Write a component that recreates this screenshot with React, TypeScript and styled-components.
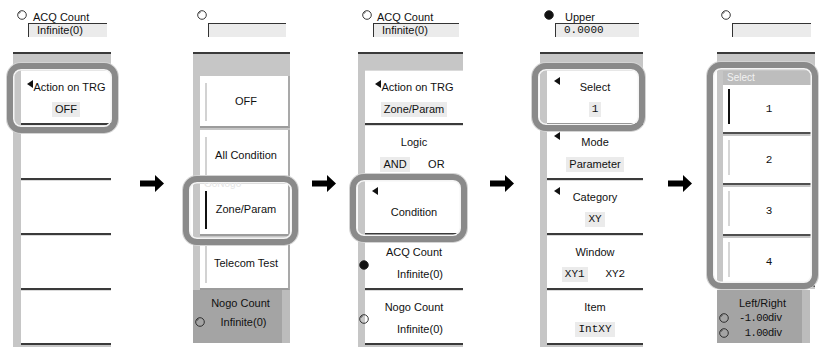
import React from "react";
import styled, { createGlobalStyle, css } from "styled-components";

const GlobalStyle = createGlobalStyle`
  body {
    margin: 0;
    background: #fff;
  }
  * {
    box-sizing: border-box;
  }
`;

const Stage = styled.div`
  display: flex;
  width: 821px;
  height: 347px;
  padding-left: 13px;
  overflow: hidden;
  font-family: "Liberation Sans", Arial, sans-serif;
  font-size: 11px;
  color: #111;
`;

const Panel = styled.div<{ $w: number }>`
  width: ${p => p.$w}px;
  flex: none;
  display: flex;
  flex-direction: column;
`;

const ArrowSlot = styled.div<{ $w: number }>`
  width: ${p => p.$w}px;
  flex: none;
  display: flex;
  justify-content: center;
  padding-top: 175px;
`;

const Header = styled.div`
  height: 54px;
  flex: none;
  border-bottom: 2px solid #3a3a3a;
  display: flex;
  align-items: flex-start;
  padding: 10px 4px 0 4px;
`;

const Field = styled.div`
  flex: 1;
  margin-left: 1px;
  padding-top: 1px;
`;

const FieldLabel = styled.div<{ $pad: number }>`
  height: 12px;
  line-height: 12px;
  padding-left: ${p => p.$pad}px;
  white-space: nowrap;
`;

const FieldBox = styled.div<{ $mono?: boolean }>`
  height: 14px;
  border-top: 1px solid #333;
  border-left: 1px solid #333;
  background: #ebebeb;
  line-height: 13px;
  padding-left: 8px;
  white-space: nowrap;
  ${p => p.$mono && css`
    font-family: "Liberation Mono", monospace;
    font-size: 11px;
  `}
`;

const Body = styled.div<{ $strip: number }>`
  flex: 1;
  background: #c6c6c6;
  padding: 16px 0 0 ${p => p.$strip}px;
  display: flex;
  flex-direction: column;
`;

const OpenBody = styled.div`
  flex: 1;
  display: flex;
  flex-direction: column;
`;

const ListArea = styled.div<{ $strip: number; $top: number }>`
  background: #c6c6c6;
  padding: ${p => p.$top}px 0 0 ${p => p.$strip}px;
`;

const ring = (inset: string) => css`
  &::after {
    content: "";
    position: absolute;
    inset: ${inset};
    border: 6px solid #8a8a8a;
    border-radius: 14px;
    box-shadow: inset 0 0 0 1.5px #f4f4f4, 0 0 0 1px #d4d4d4;
    pointer-events: none;
    z-index: 3;
  }
`;

const Key = styled.div<{ $ring?: string; $pt?: number }>`
  position: relative;
  height: 55px;
  flex: none;
  background: #fff;
  border-top: 1px solid #dadada;
  border-bottom: 2px solid #3a3a3a;
  display: flex;
  flex-direction: column;
  align-items: center;
  justify-content: center;
  gap: 8px;
  padding-top: ${p => p.$pt ?? 3}px;
  ${p => p.$ring && ring(p.$ring)}
`;

const Title = styled.div`
  line-height: 13px;
  white-space: nowrap;
  display: flex;
  align-items: flex-start;
`;

const Value = styled.span<{ $hl?: boolean; $mono?: boolean; $shift?: number }>`
  line-height: 15px;
  padding: 0 3px;
  white-space: nowrap;
  margin-left: ${p => p.$shift ?? 0}px;
  background: ${p => (p.$hl ? "#ebebeb" : "transparent")};
  ${p => p.$mono && css`
    font-family: "Liberation Mono", monospace;
  `}
`;

const Options = styled.div`
  align-self: stretch;
  display: flex;
  justify-content: space-evenly;
`;

const Tri = styled.span`
  display: inline-block;
  width: 0;
  height: 0;
  border-top: 4px solid transparent;
  border-bottom: 4px solid transparent;
  border-right: 6px solid #111;
  margin: -1px 1px 0 0;
`;

const CornerTri = styled(Tri)`
  position: absolute;
  left: 7px;
  top: 7px;
`;

const KnobSpot = styled.span<{ $top: number; $left: number }>`
  position: absolute;
  top: ${p => p.$top}px;
  left: ${p => p.$left}px;
  line-height: 0;
`;

const ChoiceList = styled.div`
  display: flex;
  flex-direction: column;
  gap: 2px;
`;

const Choice = styled.div<{ $on?: boolean; $ring?: string }>`
  position: relative;
  height: 52px;
  background: #fff;
  border-right: 2px solid #a9a9a9;
  border-bottom: 2px solid #9c9c9c;
  display: flex;
  align-items: center;
  justify-content: center;
  padding-left: 4px;
  &::before {
    content: "";
    position: absolute;
    left: 5px;
    top: 7px;
    bottom: 5px;
    width: 2px;
    background: ${p => (p.$on ? "#111" : "#d2d2d2")};
  }
  ${p => p.$ring && ring(p.$ring)}
`;

const GroupTag = styled.span`
  position: absolute;
  left: 4px;
  top: -5px;
  font-size: 10px;
  line-height: 10px;
  color: #e4e4e4;
`;

const SelectList = styled.div<{ $ring?: string }>`
  position: relative;
  ${p => p.$ring && ring(p.$ring)}
`;

const Caption = styled.div`
  height: 14px;
  line-height: 14px;
  font-size: 10px;
  color: #f2f2f2;
  padding-left: 4px;
  background: #bdbdbd;
`;

const Item = styled.div<{ $on?: boolean }>`
  position: relative;
  height: 49px;
  margin-bottom: 2px;
  background: #fff;
  border-bottom: 2px solid #505050;
  display: flex;
  align-items: center;
  justify-content: center;
  font-family: "Liberation Mono", monospace;
  &::before {
    content: "";
    position: absolute;
    left: 5px;
    top: 4px;
    bottom: 8px;
    width: 2px;
    background: ${p => (p.$on ? "#111" : "#d6d6d6")};
  }
`;

const Readout = styled.div<{ $w: number; $mt: number }>`
  width: ${p => p.$w}px;
  height: 53px;
  margin-top: ${p => p.$mt}px;
  background: #a4a4a4;
  border-right: 8px solid #bcbcbc;
  padding: 6px 0 0 2px;
  display: flex;
  flex-direction: column;
`;

const ReadTitle = styled.div`
  text-align: center;
  line-height: 14px;
  padding-left: 4px;
`;

const ReadRow = styled.div<{ $end?: boolean }>`
  display: flex;
  align-items: center;
  height: 15px;
  margin-top: ${p => (p.$end ? 0 : 4)}px;
`;

const ReadValue = styled.span<{ $end?: boolean }>`
  flex: 1;
  text-align: ${p => (p.$end ? "right" : "center")};
  padding-right: ${p => (p.$end ? 20 : 0)}px;
  white-space: nowrap;
`;

const Num = styled.span`
  font-family: "Liberation Mono", monospace;
  font-size: 10.5px;
  letter-spacing: -0.5px;
`;

function Knob({ filled }: { filled?: boolean }) {
  return (
    <svg width="10" height="10" viewBox="0 0 10 10">
      <circle cx="5" cy="5" r="4.3" fill={filled ? "#111" : "none"} stroke="#222" strokeWidth="0.9" />
      {!filled && <path d="M2 3.6 A3.4 3.4 0 0 1 3.6 2" fill="none" stroke="#222" strokeWidth="0.9" />}
    </svg>
  );
}

function Arrow() {
  return (
    <svg width="24" height="17" viewBox="0 0 24 17">
      <path d="M0 5.5 H15 V0 L24 8.5 L15 17 V11.5 H0 Z" fill="#000" />
    </svg>
  );
}

interface HeadProps {
  label?: string;
  value?: string;
  pad?: number;
  filled?: boolean;
  mono?: boolean;
}

function Head({ label = "", value = "", pad = 5, filled, mono }: HeadProps) {
  return (
    <Header>
      <Knob filled={filled} />
      <Field>
        <FieldLabel $pad={pad}>{label}</FieldLabel>
        <FieldBox $mono={mono}>{value}</FieldBox>
      </Field>
    </Header>
  );
}

export default function App() {
  return (
    <>
      <GlobalStyle />
      <Stage>
        <Panel $w={98}>
          <Head label="ACQ Count" value="Infinite(0)" pad={5} />
          <Body $strip={8}>
            <Key $ring="-8px -7px -10px -14px">
              <Title><Tri />Action on TRG</Title>
              <Value $hl>OFF</Value>
            </Key>
            <Key />
            <Key />
            <Key />
            <Key />
          </Body>
        </Panel>

        <ArrowSlot $w={82}><Arrow /></ArrowSlot>

        <Panel $w={97}>
          <Head />
          <OpenBody>
            <ListArea $strip={7} $top={22}>
              <ChoiceList>
                <Choice>OFF</Choice>
                <Choice>All Condition</Choice>
                <Choice $on $ring="-8px -10px -11px -17px">
                  <GroupTag>GoNogo</GroupTag>
                  Zone/Param
                </Choice>
                <Choice>Telecom Test</Choice>
              </ChoiceList>
            </ListArea>
            <Readout $w={97} $mt={0}>
              <ReadTitle>Nogo Count</ReadTitle>
              <ReadRow>
                <Knob />
                <ReadValue>Infinite(0)</ReadValue>
              </ReadRow>
            </Readout>
          </OpenBody>
        </Panel>

        <ArrowSlot $w={68}><Arrow /></ArrowSlot>

        <Panel $w={105}>
          <Head label="ACQ Count" value="Infinite(0)" pad={4} />
          <Body $strip={7}>
            <Key>
              <Title><Tri />Action on TRG</Title>
              <Value $hl>Zone/Param</Value>
            </Key>
            <Key>
              <Title>Logic</Title>
              <Options>
                <Value $hl>AND</Value>
                <Value>OR</Value>
              </Options>
            </Key>
            <Key $ring="-7px -4px -9px -15px" $pt={10}>
              <CornerTri />
              <Title>Condition</Title>
            </Key>
            <Key>
              <KnobSpot $top={24} $left={-6}><Knob filled /></KnobSpot>
              <Title>ACQ Count</Title>
              <Value $shift={12}>Infinite(0)</Value>
            </Key>
            <Key>
              <KnobSpot $top={23} $left={-6}><Knob /></KnobSpot>
              <Title>Nogo Count</Title>
              <Value $shift={12}>Infinite(0)</Value>
            </Key>
          </Body>
        </Panel>

        <ArrowSlot $w={77}><Arrow /></ArrowSlot>

        <Panel $w={103}>
          <Head label="Upper" value="0.0000" pad={10} filled mono />
          <Body $strip={7}>
            <Key $ring="-8px -2px -8px -15px">
              <CornerTri />
              <Title>Select</Title>
              <Value $hl $mono>1</Value>
            </Key>
            <Key>
              <CornerTri />
              <Title>Mode</Title>
              <Value $hl>Parameter</Value>
            </Key>
            <Key>
              <CornerTri />
              <Title>Category</Title>
              <Value $hl $mono>XY</Value>
            </Key>
            <Key>
              <Title>Window</Title>
              <Options>
                <Value $hl $mono>XY1</Value>
                <Value $mono>XY2</Value>
              </Options>
            </Key>
            <Key>
              <Title>Item</Title>
              <Value $hl $mono>IntXY</Value>
            </Key>
          </Body>
        </Panel>

        <ArrowSlot $w={74}><Arrow /></ArrowSlot>

        <Panel $w={98}>
          <Head />
          <OpenBody>
            <ListArea $strip={6} $top={17}>
              <SelectList $ring="-9px -3px -2px -16px">
                <Caption>Select</Caption>
                <Item $on>1</Item>
                <Item>2</Item>
                <Item>3</Item>
                <Item>4</Item>
              </SelectList>
            </ListArea>
            <Readout $w={93} $mt={1}>
              <ReadTitle>Left/Right</ReadTitle>
              <ReadRow $end>
                <Knob />
                <ReadValue $end><Num>-1.00</Num>div</ReadValue>
              </ReadRow>
              <ReadRow $end>
                <Knob />
                <ReadValue $end><Num>1.00</Num>div</ReadValue>
              </ReadRow>
            </Readout>
          </OpenBody>
        </Panel>
      </Stage>
    </>
  );
}
